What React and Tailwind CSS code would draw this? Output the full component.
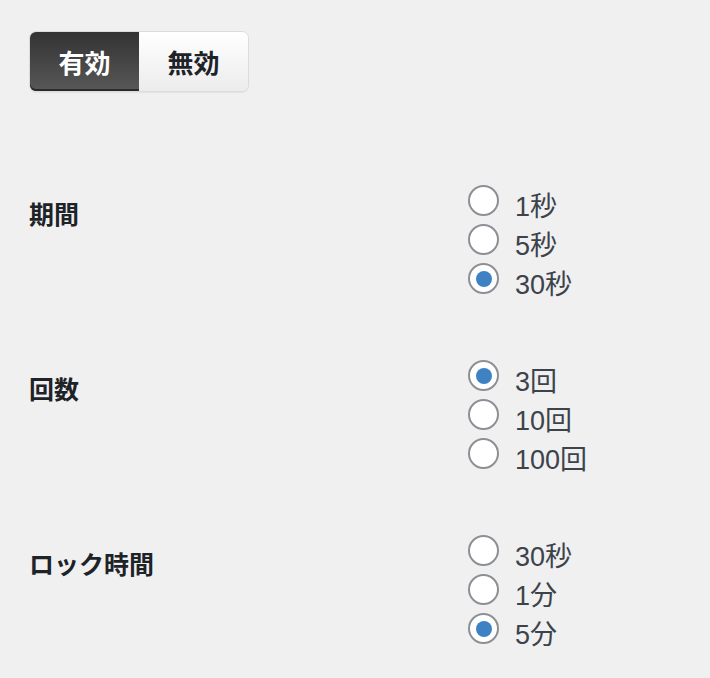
import { useState } from "react";

const groups = [
  { label: "期間", name: "period", options: ["1秒", "5秒", "30秒"], checked: 2 },
  { label: "回数", name: "count", options: ["3回", "10回", "100回"], checked: 0 },
  { label: "ロック時間", name: "lock", options: ["30秒", "1分", "5分"], checked: 2 },
];

function Radio({ checked, label, onClick }) {
  return (
    <div className="flex h-[39px] items-center gap-[16px] cursor-pointer" onClick={onClick}>
      <span className="flex h-[31px] w-[31px] items-center justify-center rounded-full border-2 border-[#8c8f94] bg-white">
        {checked && <span className="h-[16px] w-[16px] rounded-full bg-[#3f82c4]" />}
      </span>
      <span className="mt-[12px] font-['Liberation_Sans','Noto_Sans_CJK_JP',sans-serif] text-[27px] leading-[30px] text-[#3c434a]">
        {label}
      </span>
    </div>
  );
}

export default function App() {
  const [enabled, setEnabled] = useState(true);
  const [values, setValues] = useState(groups.map((g) => g.checked));

  return (
    <div className="min-h-screen bg-[#f0f0f1] pl-[29px] pt-[31px] font-['Noto_Sans_CJK_JP','Noto_Sans',sans-serif]">
      {/* toggle */}
      <div className="flex h-[61px] w-[220px] rounded-[7px] border border-[#dcdcde] shadow-[0_1px_1px_rgba(0,0,0,0.06)]">
        <button
          onClick={() => setEnabled(true)}
          className={`w-[109px] rounded-l-[6px] text-[26px] font-bold ${
            enabled
              ? "bg-gradient-to-b from-[#333333] to-[#585858] text-white shadow-[inset_0_-2px_0_#2a2a2a]"
              : "bg-gradient-to-b from-white to-[#ececec] text-[#1d2327]"
          }`}
        >
          有効
        </button>
        <button
          onClick={() => setEnabled(false)}
          className={`flex-1 rounded-r-[6px] text-[26px] font-bold ${
            !enabled
              ? "bg-gradient-to-b from-[#333333] to-[#585858] text-white"
              : "bg-gradient-to-b from-white to-[#ececec] text-[#1d2327]"
          }`}
        >
          無効
        </button>
      </div>

      <div className="mt-[89px] flex flex-col gap-[58px]">
        {groups.map((g, gi) => (
          <div key={g.name} className="flex">
            <div className="w-[439px] pt-[19px] text-[25px] font-bold leading-[26px] text-[#1d2327]">
              {g.label}
            </div>
            <div className="flex flex-col">
              {g.options.map((opt, oi) => (
                <Radio
                  key={opt}
                  label={opt}
                  checked={values[gi] === oi}
                  onClick={() => setValues(values.map((v, i) => (i === gi ? oi : v)))}
                />
              ))}
            </div>
          </div>
        ))}
      </div>
    </div>
  );
}
